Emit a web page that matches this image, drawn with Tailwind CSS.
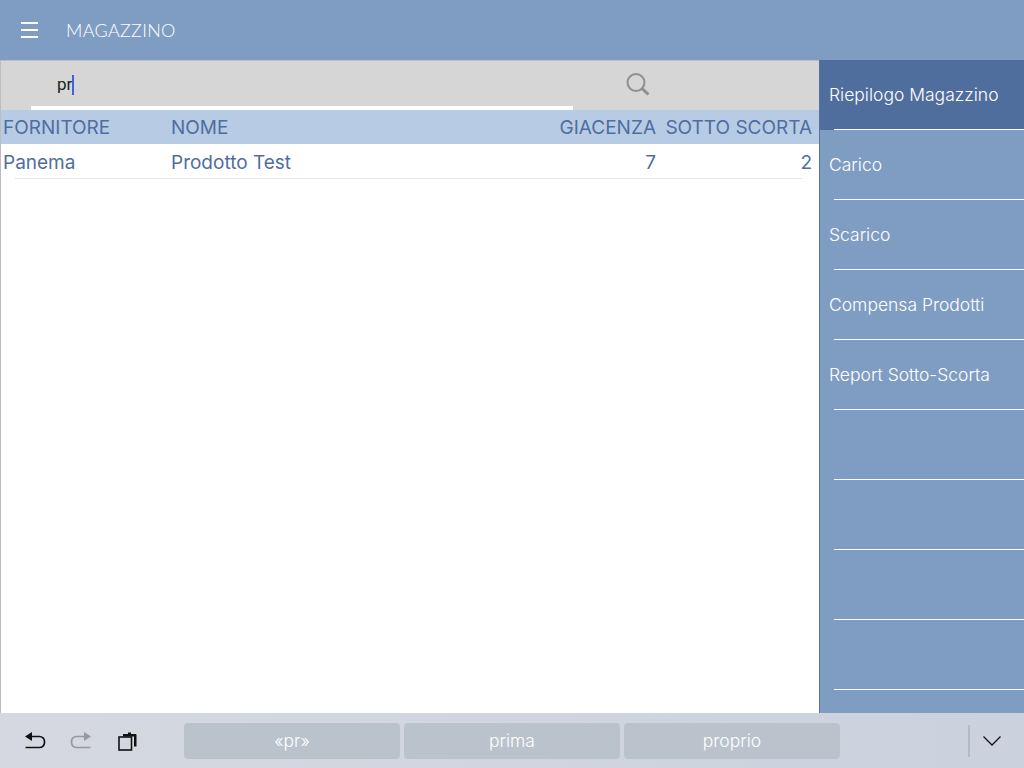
<!DOCTYPE html>
<html><head><meta charset="utf-8"><script src="https://cdn.jsdelivr.net/npm/@tailwindcss/browser@4"></script></head>
<body class="m-0">
<div class="w-[1024px] h-[768px] overflow-hidden flex flex-col bg-white font-['Inter',sans-serif]">
  <header class="h-[60px] shrink-0 bg-[#7f9dc3] flex items-center">
    <svg class="ml-[21px] w-[17px] h-[16px]" viewBox="0 0 17 16"><path d="M0 1h17M0 8h17M0 15h17" stroke="#fff" stroke-width="2"/></svg>
    <span class="ml-[28px] text-[18px] text-white font-['Lato',sans-serif] font-light tracking-[0.3px]">MAGAZZINO</span>
  </header>
  <div class="flex-1 flex min-h-0">
    <main class="w-[819px] flex flex-col border-l border-t border-[#bdbdbd] border-r-0">
      <div class="h-[49px] shrink-0 bg-[#d6d6d6] relative flex items-center">
        <div class="ml-[30px] w-[542px] h-full border-b-4 border-white flex items-center pl-[26px] pt-[3px]">
          <span class="text-[17px] text-[#222] font-['Roboto',sans-serif]">pr</span><span class="w-[2px] h-[20px] bg-[#3f62e0]"></span>
        </div>
        <svg class="ml-[52px] mb-[1px] w-[26px] h-[26px]" viewBox="0 0 26 26" fill="none" stroke="#8f8f8f"><circle cx="11" cy="10.5" r="8.5" stroke-width="2"/><path d="M17 16.5l6.5 6" stroke-width="3"/></svg>
      </div>
      <div class="h-[34px] shrink-0 bg-[#b7cbe4] flex items-center text-[#4f6e9f] text-[19px] pl-[2px] pr-[6px] pt-[2px]">
        <span class="w-[168px]">FORNITORE</span><span class="flex-1">NOME</span><span class="w-[99px] text-right">GIACENZA</span><span class="w-[156px] text-right mr-[1px]">SOTTO SCORTA</span>
      </div>
      <div class="relative h-[35px] shrink-0 flex items-center text-[#4f6e9f] text-[19px] pl-[2px] pr-[6px] pt-[3px]">
        <span class="w-[168px]">Panema</span><span class="flex-1">Prodotto Test</span><span class="w-[99px] text-right">7</span><span class="w-[156px] text-right mr-[1px]">2</span>
        <div class="absolute left-[14px] right-[16px] bottom-0 h-px bg-[#e6e6e6]"></div>
      </div>
    </main>
    <aside class="w-[205px] bg-[#7f9dc3] border-l border-[#5a739b] text-white text-[17.5px] font-['Inter',sans-serif] font-light">
      <div class="h-[70px] bg-[#506e9d] relative flex items-center pl-[9px]">Riepilogo Magazzino<div class="absolute left-[14px] right-0 bottom-0 h-px bg-white"></div></div>
      <div class="h-[70px] relative flex items-center pl-[9px]">Carico<div class="absolute left-[14px] right-0 bottom-0 h-px bg-white"></div></div>
      <div class="h-[70px] relative flex items-center pl-[9px]">Scarico<div class="absolute left-[14px] right-0 bottom-0 h-px bg-white"></div></div>
      <div class="h-[70px] relative flex items-center pl-[9px]">Compensa Prodotti<div class="absolute left-[14px] right-0 bottom-0 h-px bg-white"></div></div>
      <div class="h-[70px] relative flex items-center pl-[9px]">Report Sotto-Scorta<div class="absolute left-[14px] right-0 bottom-0 h-px bg-white"></div></div>
      <div class="h-[70px] relative"><div class="absolute left-[14px] right-0 bottom-0 h-px bg-white"></div></div>
      <div class="h-[70px] relative"><div class="absolute left-[14px] right-0 bottom-0 h-px bg-white"></div></div>
      <div class="h-[70px] relative"><div class="absolute left-[14px] right-0 bottom-0 h-px bg-white"></div></div>
      <div class="h-[70px] relative"><div class="absolute left-[14px] right-0 bottom-0 h-px bg-white"></div></div>
    </aside>
  </div>
  <footer class="h-[55px] shrink-0 bg-gradient-to-r from-[#d5d8e0] to-[#cbd2de] flex items-center font-['Inter',sans-serif]">
    <svg class="ml-[24px] w-[22px] h-[20px]" viewBox="0 0 22 20" fill="none"><path d="M1 5.5l7-4.5v9z" fill="#111"/><path d="M7 5.5h8.5a5 5 0 0 1 5 5v1a5 5 0 0 1-5 5H1.500" stroke="#111" stroke-width="1.700"/></svg>
    <svg class="ml-[24px] w-[22px] h-[20px]" viewBox="0 0 22 20" fill="none"><path d="M21 5.500l-7-4.500v9z" fill="#999"/><path d="M15 5.500H6.500a5 5 0 0 0-5 5v1a5 5 0 0 0 5 5h14" stroke="#999" stroke-width="1.700"/></svg>
    <svg class="ml-[26px] w-[20px] h-[20px]" viewBox="0 0 20 20" fill="none"><path d="M5 4.500V3h5V1.500h3V3h4.500a1 1 0 0 1 1 1v11.500H16V5.500H5z" fill="#111"/><rect x="1" y="6" width="12.500" height="13" stroke="#111" stroke-width="1.600"/></svg>
    <div class="ml-[46px] flex gap-[4px] font-light">
      <div class="w-[216px] h-[36px] rounded-[4px] bg-[#bac3cb] text-white text-[17.5px] pt-[2px] flex items-center justify-center">«pr»</div>
      <div class="w-[216px] h-[36px] rounded-[4px] bg-[#bac3cb] text-white text-[17.5px] pt-[2px] flex items-center justify-center">prima</div>
      <div class="w-[216px] h-[36px] rounded-[4px] bg-[#bac3cb] text-white text-[17.5px] pt-[2px] flex items-center justify-center">proprio</div>
    </div>
    <div class="ml-[128px] w-[2px] h-[32px] bg-[#b4bbc6]"></div>
    <svg class="ml-[13px] w-[18px] h-[10px]" viewBox="0 0 18 10" fill="none"><path d="M0.500 0.500L9 9l8.500-8.500" stroke="#111" stroke-width="1.300"/></svg>
  </footer>
</div>
</body></html>
